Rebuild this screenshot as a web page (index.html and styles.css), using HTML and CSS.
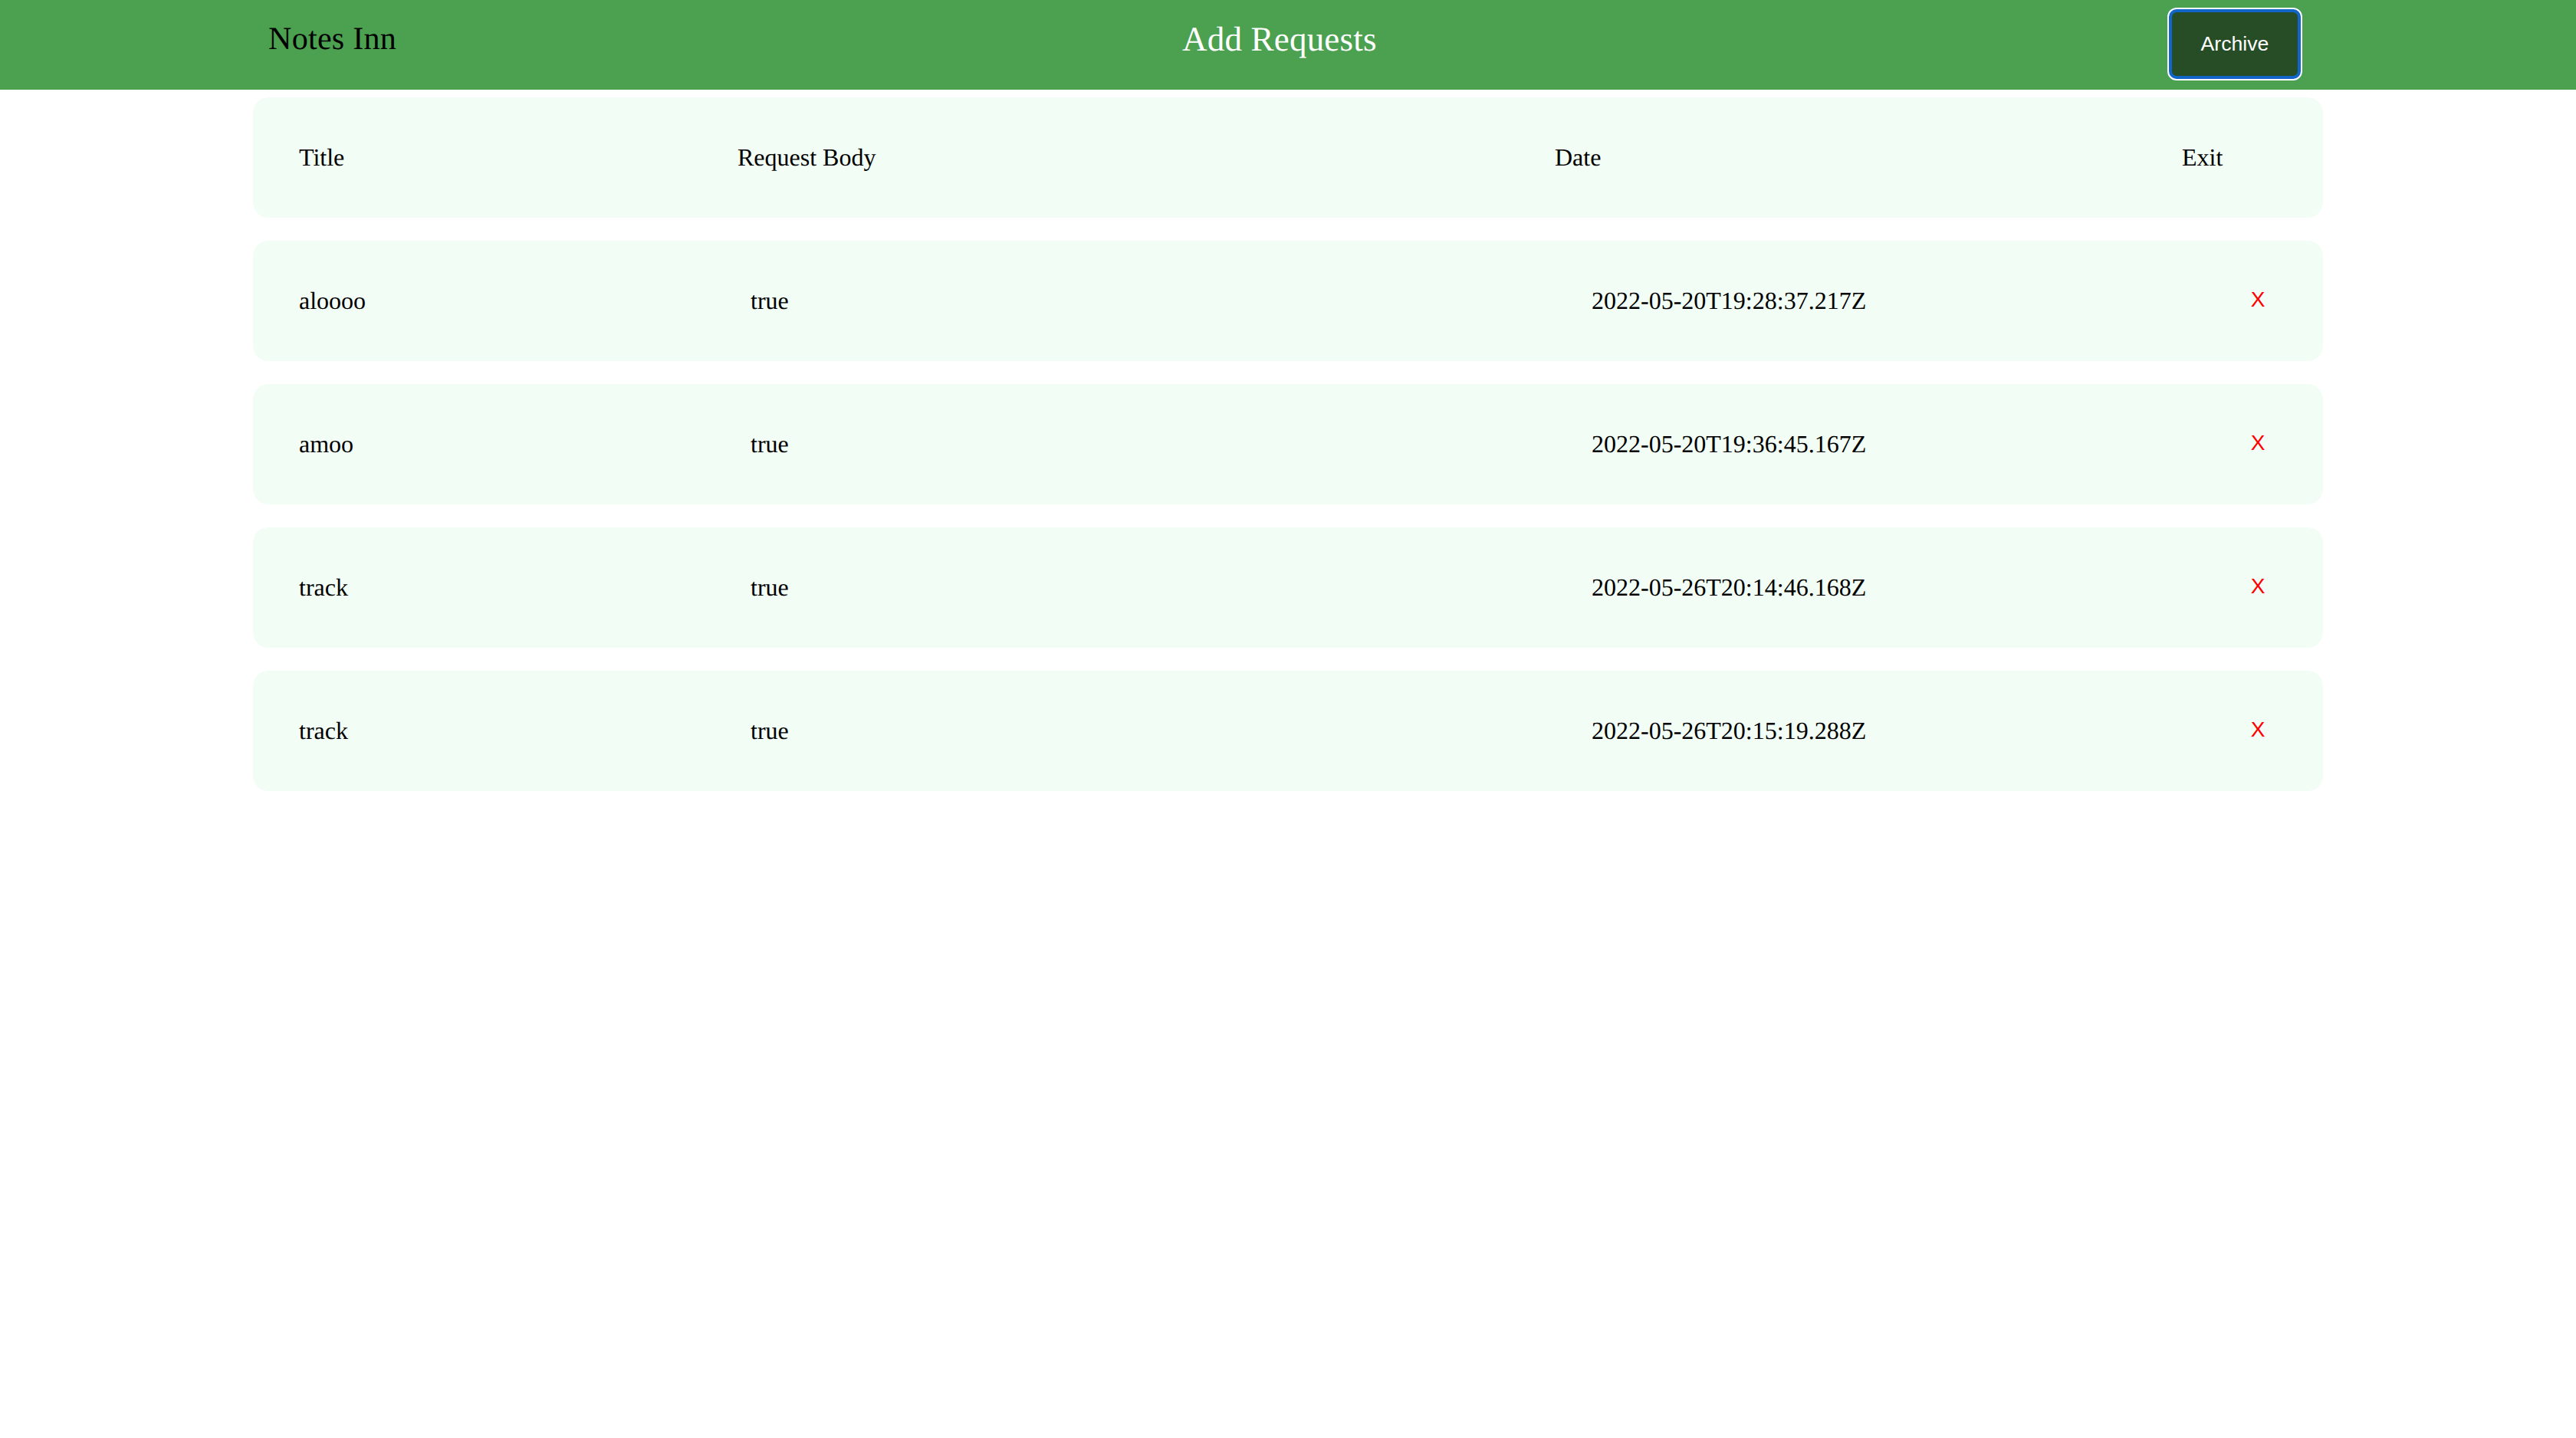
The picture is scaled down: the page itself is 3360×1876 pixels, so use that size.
FILE: index.html
```html
<!DOCTYPE html>
<html lang="en">
<head>
  <meta charset="UTF-8">
  <meta name="viewport" content="width=device-width, initial-scale=1.0">
  <title>Notes Inn</title>
  <link rel="stylesheet" href="styles.css">
</head>
<body>
  <nav class="navbar">
    <span class="brand">Notes Inn</span>
    <span class="page-title">Add Requests</span>
    <button class="archive-btn" type="button">Archive</button>
  </nav>

  <main class="requests">
    <div class="row row-head">
      <span>Title</span>
      <span>Request Body</span>
      <span>Date</span>
      <span>Exit</span>
    </div>
    <div class="row row-item row-first">
      <span>aloooo</span>
      <span>true</span>
      <span>2022-05-20T19:28:37.217Z</span>
      <button class="exit-btn" type="button">X</button>
    </div>
    <div class="row row-item">
      <span>amoo</span>
      <span>true</span>
      <span>2022-05-20T19:36:45.167Z</span>
      <button class="exit-btn" type="button">X</button>
    </div>
    <div class="row row-item">
      <span>track</span>
      <span>true</span>
      <span>2022-05-26T20:14:46.168Z</span>
      <button class="exit-btn" type="button">X</button>
    </div>
    <div class="row row-item">
      <span>track</span>
      <span>true</span>
      <span>2022-05-26T20:15:19.288Z</span>
      <button class="exit-btn" type="button">X</button>
    </div>
  </main>
</body>
</html>
```

FILE: styles.css
```css
body {
  margin: 0;
  background-color: #fff;
  color: #000;
  font-family: "Liberation Serif", serif;
  font-size: 32px;
  text-rendering: geometricPrecision;
}
.navbar {
  display: grid;
  grid-template-columns: 1192px 1fr auto;
  align-items: center;
  height: 117px;
  padding: 0 357px 0 350px;
  box-sizing: border-box;
  background-color: #4ba150;
}
.brand {
  font-size: 42px;
  letter-spacing: 0.3px;
  margin-top: -16px;
}
.page-title {
  font-size: 45px;
  letter-spacing: 0.2px;
  color: #fff;
  margin-top: -16px;
}
.archive-btn {
  width: 176px;
  height: 95px;
  padding: 0;
  margin-top: -3px;
  border: 6px solid #1366c9;
  outline: 2px solid #fff;
  outline-offset: -2px;
  border-radius: 12px;
  background-color: #264d26;
  color: #fff;
  font-family: "Liberation Sans", sans-serif;
  font-size: 26.67px;
}
.requests {
  display: flex;
  flex-direction: column;
  gap: 30px;
  width: 2700px;
  margin: 10px auto 0;
}
.row {
  display: grid;
  align-items: center;
  height: 157px;
  padding-left: 60px;
  box-sizing: border-box;
  background-color: #f2fdf5;
  border-radius: 20px;
}
.row-head {
  grid-template-columns: 572px 1066px 818px 1fr;
}
.row-item {
  grid-template-columns: 589px 1097px 859px 1fr;
}
.exit-btn {
  width: 20px;
  padding: 0;
  border: none;
  background: none;
  color: #ff0000;
  font-family: "Liberation Sans", sans-serif;
  font-size: 28px;
  line-height: 1;
  margin-top: -3px;
}
```
